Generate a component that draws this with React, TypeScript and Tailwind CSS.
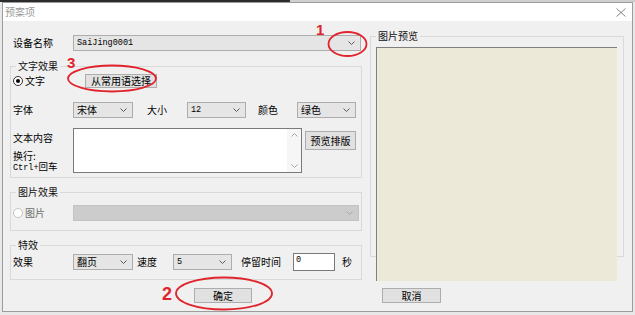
import React from "react";

const Chevron = ({ color = "#5a5a5a" }: { color?: string }) => (
  <svg width="7" height="4" viewBox="0 0 7 4" className="shrink-0">
    <polyline points="0.5,0.5 3.5,3.5 6.5,0.5" fill="none" stroke={color} strokeWidth="1" />
  </svg>
);

function Combo({ text, cls, mono }: { text: string; cls: string; mono?: boolean }) {
  return (
    <div className={"flex h-[16px] items-center justify-between border border-[#adadad] bg-[#e5e5e5] pl-[3px] pr-[5px] " + cls}>
      <span className={mono ? "font-['Liberation_Mono',monospace] text-[8.5px] leading-none" : "text-[10px] leading-none"}>{text}</span>
      <Chevron />
    </div>
  );
}

function Btn({ text, cls }: { text: string; cls: string }) {
  return (
    <div className={"flex items-center justify-center border border-[#adadad] bg-[#e1e1e1] text-[10px] leading-none " + cls}>
      {text}
    </div>
  );
}

function GroupLabel({ text }: { text: string }) {
  return (
    <div className="-mt-[7px] -mb-[5px] ml-[5px] flex h-[12px]">
      <span className="bg-[#f0f0f0] px-[2px] text-[10px] leading-[12px] text-[#111]">{text}</span>
    </div>
  );
}

export default function App() {
  return (
    <div className="relative flex h-[315px] w-[635px] flex-col overflow-hidden bg-[#e8e8e8] font-['Noto_Sans_CJK_SC','Noto_Sans',sans-serif] text-black">
      {/* top strip */}
      <div className="flex h-[2px] w-full">
        <div className="h-full w-[290px] bg-[#2b2b2b]" />
        <div className="h-full flex-1 bg-[#cfcfcf]" />
      </div>
      <div className="flex">
        <div className="ml-[2px] flex h-[310px] w-[631px] flex-col border border-[#9c9c9c] bg-[#f0f0f0]">
          {/* title bar */}
          <div className="flex h-[18px] items-center justify-between bg-white pl-[2px] pr-[6px]">
            <span className="text-[10px] leading-none text-[#9a9a9a]">预案项</span>
            <svg width="10" height="9" viewBox="0 0 10 9">
              <line x1="0.5" y1="0.5" x2="9.5" y2="8.5" stroke="#7a7a7a" strokeWidth="0.9" />
              <line x1="9.5" y1="0.5" x2="0.5" y2="8.5" stroke="#7a7a7a" strokeWidth="0.9" />
            </svg>
          </div>
          {/* body */}
          <div className="flex flex-1 flex-col pl-[7px] pt-[14px]">
            <div className="flex">
              {/* left column */}
              <div className="flex w-[352px] flex-col">
                <div className="flex h-[16px] items-center">
                  <span className="w-[63px] pl-[3px] text-[10px] leading-none">设备名称</span>
                  <Combo text="SaiJing0001" cls="w-[288px]" mono />
                </div>

                {/* 文字效果 */}
                <div className="mt-[15px] flex h-[112px] flex-col border border-[#d9d9d9]">
                  <GroupLabel text="文字效果" />
                  <div className="mt-[7px] flex h-[14px] items-center">
                    <div className="ml-[2px] flex h-[10px] w-[10px] items-center justify-center rounded-full border border-[#333] bg-white">
                      <div className="h-[4px] w-[4px] rounded-full bg-black" />
                    </div>
                    <span className="ml-[2px] text-[10px] leading-none">文字</span>
                    <Btn text="从常用语选择" cls="ml-[40px] h-[14px] w-[72px]" />
                  </div>
                  <div className="mt-[14px] flex h-[16px] items-center">
                    <span className="w-[62px] pl-[2px] text-[10px] leading-none">字体</span>
                    <Combo text="宋体" cls="w-[60px]" />
                    <span className="ml-[14px] w-[40px] text-[10px] leading-none">大小</span>
                    <Combo text="12" cls="w-[59px]" mono />
                    <span className="ml-[12px] w-[39px] text-[10px] leading-none">颜色</span>
                    <Combo text="绿色" cls="w-[59px]" />
                  </div>
                  <div className="mt-[10px] flex h-[45px]">
                    <div className="flex w-[62px] flex-col pl-[2px]">
                      <span className="mt-[4px] text-[10px] leading-[11px]">文本内容</span>
                      <span className="mt-[7px] text-[10px] leading-[11px]">换行:</span>
                      <span className="text-[9.5px] leading-[11px]">
                        <span className="font-['Liberation_Mono',monospace] text-[8.5px]">Ctrl+</span>回车
                      </span>
                    </div>
                    <div className="flex h-[45px] w-[229px] border border-[#7a7a7a] bg-white">
                      <div className="flex-1" />
                      <div className="flex w-[14px] flex-col items-center justify-between bg-[#f6f6f6] py-[4px]">
                        <svg width="7" height="4" viewBox="0 0 7 4">
                          <polyline points="0.5,3.5 3.5,0.5 6.5,3.5" fill="none" stroke="#a6a6a6" strokeWidth="1" />
                        </svg>
                        <svg width="7" height="4" viewBox="0 0 7 4">
                          <polyline points="0.5,0.5 3.5,3.5 6.5,0.5" fill="none" stroke="#a6a6a6" strokeWidth="1" />
                        </svg>
                      </div>
                    </div>
                    <Btn text="预览排版" cls="ml-[3px] mt-[3px] h-[19px] w-[51px]" />
                  </div>
                </div>

                {/* 图片效果 */}
                <div className="mt-[14px] flex h-[39px] flex-col border border-[#d9d9d9]">
                  <GroupLabel text="图片效果" />
                  <div className="mt-[12px] flex h-[16px] items-center">
                    <div className="ml-[2px] h-[10px] w-[10px] rounded-full border border-[#c4c4c4] bg-white" />
                    <span className="ml-[2px] w-[48px] text-[10px] leading-none text-[#6e6e6e]">图片</span>
                    <div className="flex h-[16px] w-[286px] items-center justify-end border border-[#c2c2c2] bg-[#cccccc] pr-[5px]">
                      <Chevron color="#a8a8a8" />
                    </div>
                  </div>
                </div>

                {/* 特效 */}
                <div className="mt-[14px] flex h-[35px] flex-col border border-[#d9d9d9]">
                  <GroupLabel text="特效" />
                  <div className="mt-[7px] flex h-[18px] items-center">
                    <span className="w-[62px] pl-[2px] text-[10px] leading-none">效果</span>
                    <Combo text="翻页" cls="w-[60px]" />
                    <span className="ml-[4px] w-[36px] text-[10px] leading-none">速度</span>
                    <Combo text="5" cls="w-[59px]" mono />
                    <span className="ml-[9px] w-[52px] text-[10px] leading-none">停留时间</span>
                    <div className="flex h-[18px] w-[42px] items-start border border-[#7a7a7a] bg-white pl-[2px] pt-[1px]">
                      <span className="font-['Liberation_Mono',monospace] text-[8.5px] leading-[10px]">0</span>
                    </div>
                    <span className="ml-[7px] text-[10px] leading-none">秒</span>
                  </div>
                </div>
              </div>

              {/* right column */}
              <div className="ml-[8px] flex w-[254px] flex-col">
                <div className="mt-[1px] flex h-[221px] flex-col border border-[#d9d9d9]">
                  <GroupLabel text="图片预览" />
                  <div className="ml-[5px] mt-[10px] h-[234px] w-[241px] shrink-0 border-l border-t border-[#7f7f7f] bg-[#ece9d8]" />
                </div>
              </div>
            </div>

            {/* buttons */}
            <div className="mt-[8px] flex">
              <Btn text="确定" cls="ml-[184px] h-[15px] w-[58px]" />
              <Btn text="取消" cls="ml-[130px] h-[15px] w-[59px]" />
            </div>
          </div>
        </div>
      </div>

      {/* red annotations */}
      <svg className="pointer-events-none absolute left-0 top-0" width="635" height="315" viewBox="0 0 635 315">
        <ellipse cx="347.5" cy="44" rx="19" ry="12" fill="none" stroke="#e0242b" strokeWidth="1.8" />
        <ellipse cx="112" cy="78.5" rx="44" ry="13" fill="none" stroke="#e0242b" strokeWidth="1.8" />
        <ellipse cx="224" cy="293.5" rx="48" ry="16" fill="none" stroke="#e0242b" strokeWidth="1.8" />
      </svg>
      <span className="pointer-events-none absolute left-[316px] top-[22px] font-['Liberation_Sans',sans-serif] text-[15px] font-bold leading-[15px] text-[#e0242b]">1</span>
      <span className="pointer-events-none absolute left-[67px] top-[55px] font-['Liberation_Sans',sans-serif] text-[15px] font-bold leading-[15px] text-[#e0242b]">3</span>
      <span className="pointer-events-none absolute left-[162px] top-[285px] font-['Liberation_Sans',sans-serif] text-[18px] font-bold leading-[18px] text-[#e0242b]">2</span>
    </div>
  );
}
